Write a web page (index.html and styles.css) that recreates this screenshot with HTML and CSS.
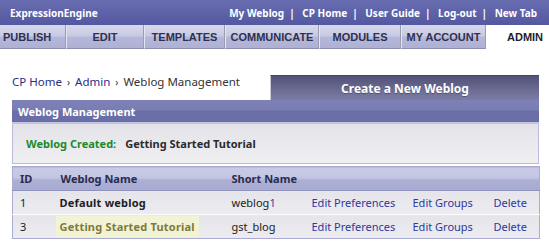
FILE: index.html
```html
<!DOCTYPE html>
<html lang="en">
<head>
    <meta charset="UTF-8">
    <title>Weblog Management</title>
    <link rel="stylesheet" href="styles.css">
</head>
<body>

    <!-- Barra superior -->
    <div class="topbar">
        <span class="brand">ExpressionEngine</span>
        <div class="toplinks">
            <a href="#">My Weblog</a><span class="sep">|</span>
            <a href="#">CP Home</a><span class="sep">|</span>
            <a href="#">User Guide</a><span class="sep">|</span>
            <a href="#">Log-out</a><span class="sep">|</span>
            <a href="#">New Tab</a>
        </div>
    </div>

    <!-- Abas -->
    <div class="tabs">
        <a class="tab tab-publish" href="#">PUBLISH</a>
        <a class="tab tab-edit" href="#">EDIT</a>
        <a class="tab tab-templates" href="#">TEMPLATES</a>
        <a class="tab tab-communicate" href="#">COMMUNICATE</a>
        <a class="tab tab-modules" href="#">MODULES</a>
        <a class="tab tab-account" href="#">MY ACCOUNT</a>
        <a class="tab tab-admin active" href="#">ADMIN</a>
    </div>

    <div class="content">
        <div class="crumb-row">
            <div class="crumbs">
                <a href="#">CP Home</a><span class="arrow">›</span><a href="#">Admin</a><span class="arrow">›</span>Weblog Management
            </div>
            <a class="create-btn" href="#">Create a New Weblog</a>
        </div>

        <div class="box-header">Weblog Management</div>
        <div class="message">
            <span class="success">Weblog Created:</span>
            <span class="msg-name">Getting Started Tutorial</span>
        </div>

        <table class="weblogs">
            <thead>
                <tr>
                    <th class="c-id">ID</th>
                    <th class="c-name">Weblog Name</th>
                    <th class="c-short">Short Name</th>
                    <th class="c-pref"></th>
                    <th class="c-groups"></th>
                    <th class="c-del"></th>
                </tr>
            </thead>
            <tbody>
                <tr>
                    <td>1</td>
                    <td class="name">Default weblog</td>
                    <td>weblog<span class="num">1</span></td>
                    <td><a href="#">Edit Preferences</a></td>
                    <td><a href="#">Edit Groups</a></td>
                    <td><a href="#">Delete</a></td>
                </tr>
                <tr>
                    <td>3</td>
                    <td class="name"><span class="new">Getting Started Tutorial</span></td>
                    <td>gst_blog</td>
                    <td><a href="#">Edit Preferences</a></td>
                    <td><a href="#">Edit Groups</a></td>
                    <td><a href="#">Delete</a></td>
                </tr>
            </tbody>
        </table>
    </div>

</body>
</html>
```

FILE: styles.css
```css
* {
    margin: 0;
    padding: 0;
    box-sizing: border-box;
}

body {
    font-family: "Noto Sans", "DejaVu Sans", sans-serif;
    font-size: 11px;
    color: #333;
    background: #fff;
}

a {
    text-decoration: none;
}

/* barra superior */
.topbar {
    height: 25px;
    display: flex;
    align-items: center;
    justify-content: space-between;
    padding: 0 12px 0 10px;
    background: linear-gradient(#686cb0, #5458a0);
    color: #fff;
    font-weight: bold;
    font-size: 10px;
}

.toplinks a {
    color: #fff;
}

.toplinks .sep {
    margin: 0 5px;
}

/* abas */
.tabs {
    display: flex;
    height: 24px;
}

.tab {
    display: flex;
    align-items: center;
    justify-content: center;
    height: 24px;
    font-family: "Liberation Sans", Arial, sans-serif;
    font-size: 11px;
    font-weight: bold;
    color: #2e3050;
    background: linear-gradient(#d6d8ec 0%, #c9cbe4 45%, #b4b7d8 55%, #aeb1d4 100%);
    border-right: 1px solid #9a9cb0;
    border-left: 1px solid #e4e5f2;
    border-bottom: 1px solid #8c8fb0;
}

.tab-publish { width: 66px; justify-content: flex-start; padding-left: 3px; border-left: none; }
.tab-edit { width: 78px; }
.tab-templates { width: 81px; }
.tab-communicate { width: 94px; }
.tab-modules { width: 82px; }
.tab-account { width: 85px; }

.tab.active {
    flex: 1;
    background: #fff;
    border: none;
    color: #1e1e2e;
    justify-content: flex-start;
    padding-left: 21px;
}

/* conteúdo */
.content {
    padding: 0 10px 0 12px;
}

.crumb-row {
    display: flex;
    justify-content: space-between;
    margin-top: 26px;
    height: 25px;
}

.crumbs {
    font-size: 11.5px;
    color: #333;
    line-height: 13px;
}

.crumbs a {
    color: #2c2c86;
}

.crumbs .arrow {
    margin: 0 5px;
    font-size: 10px;
}

.create-btn {
    width: 269px;
    display: flex;
    align-items: center;
    justify-content: center;
    color: #fff;
    font-weight: bold;
    font-size: 12px;
    background: linear-gradient(#525278, #6c6c94 60%, #7c7ca4);
    border-left: 1px solid #c8c8dc;
    border-top: 1px solid #444466;
    text-shadow: 0 1px 0 rgba(0, 0, 0, 0.3);
}

.box-header {
    height: 24px;
    display: flex;
    align-items: center;
    padding-left: 6px;
    color: #fff;
    font-weight: bold;
    font-size: 11px;
    background: linear-gradient(#7e81b6 0%, #7a7db2 45%, #6b6fa8 50%, #6a6ea7 100%);
    border-bottom: 2px solid #c3c5e2;
}

.message {
    height: 40px;
    display: flex;
    align-items: center;
    padding-left: 13px;
    font-size: 11px;
    font-weight: bold;
    background: linear-gradient(#e2e2e8, #f0f0f3);
    border: 1px solid #b9bbd9;
    border-top: none;
}

.message .success {
    color: #1a8a2c;
    margin-right: 9px;
}

.message .msg-name {
    color: #2b2b2b;
}

/* tabela */
.weblogs {
    width: 100%;
    margin-top: 2px;
    border-collapse: collapse;
    border: 1px solid #a9abd2;
    table-layout: fixed;
}

.weblogs th,
.weblogs td {
    text-align: left;
    padding: 0 0 0 7px;
    white-space: nowrap;
}

.weblogs th {
    height: 24px;
    font-weight: bold;
    color: #2a2c50;
    background: linear-gradient(#c9cbe5 0%, #c3c5e2 45%, #acafd3 55%, #a8abd1 100%);
    border-bottom: 1px solid #8e91bb;
}

.weblogs td {
    height: 24px;
    background: linear-gradient(#e4e4ea, #ececf0);
    border-top: 1px solid #fafafc;
    color: #222;
}

.weblogs td a {
    color: #2f37a0;
}

.weblogs td.name {
    font-weight: bold;
    padding-left: 6px;
    letter-spacing: 0.2px;
}

.weblogs .num {
    color: #3a42a8;
}

.weblogs .new {
    display: inline-block;
    padding: 3px 4px;
    background: #f2f2d4;
    color: #7d7a3c;
    margin-left: -4px;
}

.c-id { width: 41px; }
.c-name { width: 171px; }
.c-short { width: 80px; }
.c-pref { width: 101px; }
.c-groups { width: 81px; }
.c-del { width: 53px; }
```
